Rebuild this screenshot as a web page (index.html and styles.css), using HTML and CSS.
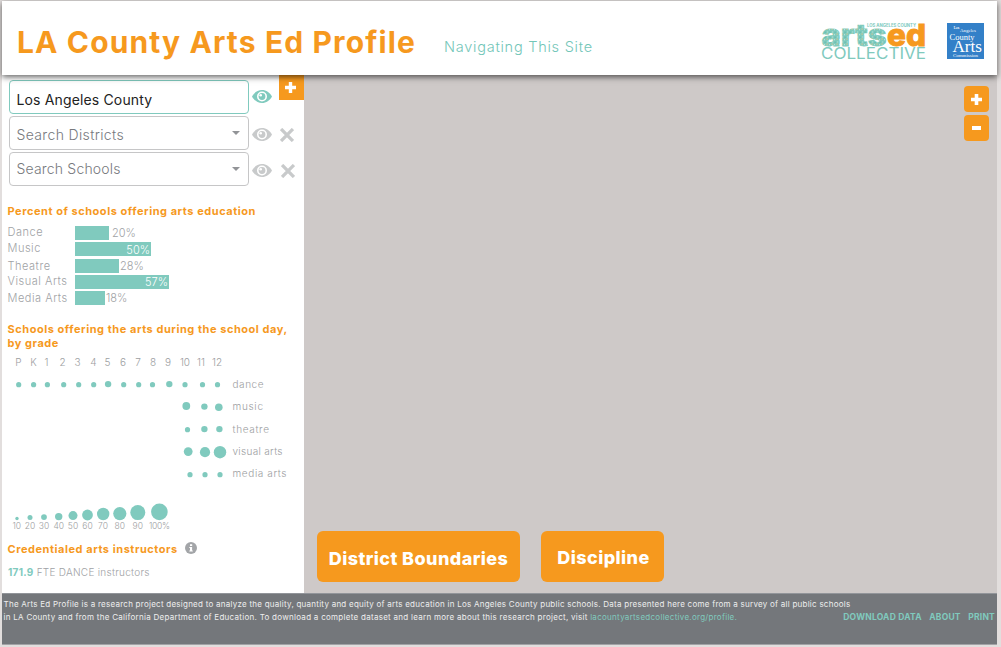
FILE: index.html
```html
<!DOCTYPE html>
<html lang="en">
<head>
<meta charset="utf-8">
<title>LA County Arts Ed Profile</title>
<link rel="stylesheet" href="styles.css">
</head>
<body>
<svg class="defs" width="0" height="0">
  <symbol id="eye" viewBox="0 0 20 13"><path fill="currentColor" fill-rule="evenodd" d="M0 6.500C2.200 2.400 5.800 0 10 0s7.800 2.400 10 6.500C17.800 10.600 14.200 13 10 13S2.200 10.600 0 6.500ZM10 1.500a5 5 0 1 0 0 10a5 5 0 1 0 0-10Z"/><circle cx="10" cy="6.500" r="3.400" fill="currentColor"/><circle cx="8.700" cy="5.200" r="1.300" fill="#fff"/></symbol>
  <symbol id="cross" viewBox="0 0 14 14"><path d="M2.200 2.200 11.800 11.800M11.800 2.200 2.200 11.800" stroke="currentColor" stroke-width="3.300" stroke-linecap="square" fill="none"/></symbol>
</svg>
<div class="frame">
  <header class="header">
    <h1 class="title">LA County Arts Ed Profile</h1>
    <a class="nav-link">Navigating This Site</a>
    <div class="logos">
      <svg class="logo-artsed" width="106" height="38" viewBox="0 0 106 38">
        <defs>
          <pattern id="confetti" width="5" height="5" patternUnits="userSpaceOnUse">
            <rect width="5" height="5" fill="#7fcabd"/>
            <rect x="0.500" y="0.500" width="1.200" height="1.200" fill="#dcc48f"/>
            <rect x="3" y="1" width="1" height="1.300" fill="#b5e0d7"/>
            <rect x="1" y="3.500" width="1.200" height="1" fill="#b5e0d7"/>
            <rect x="3.500" y="3.600" width="1.200" height="1.200" fill="#5fb9ac"/>
          </pattern>
        </defs>
        <text class="logo-word" x="0.500" y="22.800" textLength="65" lengthAdjust="spacingAndGlyphs" fill="url(#confetti)" stroke="url(#confetti)">arts</text>
        <text class="logo-word" x="66" y="22.800" textLength="39" lengthAdjust="spacingAndGlyphs" fill="#f6991e" stroke="#f6991e">ed</text>
        <text class="logo-top" x="46" y="4.300" textLength="49" lengthAdjust="spacingAndGlyphs">LOS ANGELES COUNTY</text>
        <text class="logo-bottom" x="0" y="36.300" textLength="105" lengthAdjust="spacingAndGlyphs">COLLECTIVE</text>
      </svg>
      <svg class="logo-commission" width="37" height="36" viewBox="0 0 37 36">
        <rect width="37" height="36" fill="#3380c8"/>
        <text x="6.500" y="5.500" font-size="5" textLength="6">Los</text>
        <text x="13" y="9" font-size="5" textLength="16" lengthAdjust="spacingAndGlyphs">Angeles</text>
        <text x="2.500" y="16.500" font-size="8.500" textLength="25" lengthAdjust="spacingAndGlyphs">County</text>
        <text x="5.500" y="29.200" font-size="16" textLength="29.500" lengthAdjust="spacingAndGlyphs">Arts</text>
        <text x="6" y="34" font-size="4.500" textLength="25" lengthAdjust="spacingAndGlyphs">Commission</text>
      </svg>
    </div>
  </header>

  <main class="main">
    <aside class="sidebar">
      <div class="filters">
        <div class="filter-row">
          <div class="field field-active"><span class="county">Los Angeles County</span></div>
          <svg class="eye eye-on"><use href="#eye"/></svg>
        </div>
        <div class="filter-row">
          <div class="field"><span class="districts">Search Districts</span><i class="caret"></i></div>
          <svg class="eye"><use href="#eye"/></svg>
          <svg class="cross"><use href="#cross"/></svg>
        </div>
        <div class="filter-row">
          <div class="field"><span class="schools">Search Schools</span><i class="caret"></i></div>
          <svg class="eye"><use href="#eye"/></svg>
          <svg class="cross cross-schools"><use href="#cross"/></svg>
        </div>
      </div>
      <button class="expand"><svg width="11" height="11" viewBox="0 0 11 11"><path d="M5.500 0V11M0 5.500H11" stroke="#fff" stroke-width="3.400"/></svg></button>

      <h2 class="heading percent-heading">Percent of schools offering arts education</h2>
      <div class="bars">
        <span class="bar-label">Dance</span><div class="bar-track"><div class="bar" style="width:34px"></div><span class="value value-gap">20%</span></div>
        <span class="bar-label">Music</span><div class="bar-track"><div class="bar bar-inner" style="width:76px">50%</div></div>
        <span class="bar-label label-low">Theatre</span><div class="bar-track"><div class="bar" style="width:44px"></div><span class="value">28%</span></div>
        <span class="bar-label">Visual Arts</span><div class="bar-track"><div class="bar bar-inner" style="width:94px">57%</div></div>
        <span class="bar-label label-low">Media Arts</span><div class="bar-track"><div class="bar" style="width:30px"></div><span class="value">18%</span></div>
      </div>

      <h2 class="heading grade-heading">Schools offering the arts during the school day,<br>by grade</h2>
      <svg class="grades" width="302" height="182" viewBox="2 352 302 182">
        <g class="grade-labels">
          <text x="18.500" y="366">P</text><text x="33.500" y="366">K</text><text x="46.500" y="366">1</text><text x="62.500" y="366">2</text><text x="77.500" y="366">3</text><text x="93.500" y="366">4</text><text x="107.500" y="366">5</text><text x="123" y="366">6</text><text x="138" y="366">7</text><text x="153" y="366">8</text><text x="168" y="366">9</text><text x="185" y="366">10</text><text x="201" y="366">11</text><text x="217" y="366">12</text>
        </g>
        <g class="dots">
          <circle cx="18.700" cy="384.700" r="2.600"/><circle cx="33.600" cy="384.700" r="2.600"/><circle cx="47.400" cy="384.700" r="2.600"/><circle cx="63.700" cy="384.700" r="2.600"/><circle cx="78.700" cy="384.700" r="2.600"/><circle cx="93.700" cy="384.700" r="2.600"/><circle cx="108.100" cy="384.100" r="3.200"/><circle cx="123.700" cy="384.700" r="2.600"/><circle cx="138.700" cy="384.700" r="2.600"/><circle cx="152.500" cy="384.700" r="2.600"/><circle cx="169.300" cy="384.100" r="3.200"/><circle cx="185" cy="384.700" r="2.600"/><circle cx="202.500" cy="384.700" r="2.600"/><circle cx="217.500" cy="384.700" r="2.600"/>
          <circle cx="186.300" cy="406" r="3.900"/><circle cx="204.400" cy="406.600" r="3.200"/><circle cx="218.800" cy="407.200" r="3.800"/>
          <circle cx="187.500" cy="429.700" r="2.600"/><circle cx="204.400" cy="429.100" r="3.200"/><circle cx="219.400" cy="429.100" r="3.200"/>
          <circle cx="188.200" cy="451.600" r="4.400"/><circle cx="205" cy="452.200" r="5.100"/><circle cx="220" cy="452.200" r="6.200"/>
          <circle cx="190" cy="474.700" r="2.600"/><circle cx="205" cy="474.700" r="2.600"/><circle cx="220" cy="474.700" r="2.600"/>
          <circle cx="17" cy="518.500" r="1.700"/><circle cx="30" cy="517.500" r="2.500"/><circle cx="44" cy="517.100" r="2.900"/><circle cx="58.700" cy="516.600" r="3.700"/><circle cx="73" cy="515.600" r="4.500"/><circle cx="87.500" cy="515" r="5.400"/><circle cx="103.200" cy="514" r="6.200"/><circle cx="119.800" cy="513.600" r="6.600"/><circle cx="137.800" cy="512.600" r="7.500"/><circle cx="159.400" cy="511.900" r="8.300"/>
        </g>
        <g class="series">
          <text x="232.500" y="387.500" textLength="31">dance</text><text x="232.500" y="410" textLength="30.500">music</text><text x="232.500" y="432.500" textLength="36.500">theatre</text><text x="232.500" y="454.700" textLength="50">visual arts</text><text x="232.500" y="477.300" textLength="54">media arts</text>
        </g>
        <g class="scale">
          <text x="16.700" y="528.800">10</text><text x="30" y="528.800">20</text><text x="44" y="528.800">30</text><text x="58.700" y="528.800">40</text><text x="73" y="528.800">50</text><text x="87.500" y="528.800">60</text><text x="103" y="528.800">70</text><text x="119.700" y="528.800">80</text><text x="137.800" y="528.800">90</text><text x="159.500" y="528.800" textLength="21">100%</text>
        </g>
      </svg>

      <div class="cred-line">
        <h2 class="heading cred-heading">Credentialed arts instructors</h2>
        <svg class="info" width="12" height="12" viewBox="0 0 12 12"><circle cx="6" cy="6" r="6" fill="#a3a5a8"/><path d="M5 2.200h2.200v1.700H5ZM4.300 4.900h2.800v3.500h.7v1.200H4.300V8.400H5V6.100h-.7Z" fill="#fff"/></svg>
      </div>
      <p class="instructors"><b>171.9</b> FTE DANCE instructors</p>
    </aside>

    <section class="map">
      <div class="zoom">
        <button class="zoom-btn"><svg width="11" height="11" viewBox="0 0 11 11"><path d="M5.500 0V11M0 5.500H11" stroke="#fff" stroke-width="3.600"/></svg></button>
        <button class="zoom-btn"><svg width="9" height="4" viewBox="0 0 9 4"><path d="M0 2H9" stroke="#fff" stroke-width="4"/></svg></button>
      </div>
      <div class="map-actions">
        <button class="action action-district">District Boundaries</button>
        <button class="action action-discipline">Discipline</button>
      </div>
    </section>
  </main>

  <footer class="footer">
    <p class="about">The Arts Ed Profile is a research project designed to analyze the quality, quantity and equity of arts education in Los Angeles County public schools. Data presented here come from a survey of all public schools<br><span class="about-more">in LA County and from the California Department of Education. To download a complete dataset and learn more about this research project, visit <a>lacountyartsedcollective.org/profile.</a></span></p>
    <nav class="links"><a>DOWNLOAD DATA</a><a>ABOUT</a><a>PRINT</a></nav>
  </footer>
</div>
</body>
</html>
```
FILE: styles.css
```css
* { box-sizing: border-box; }
body { margin: 0; background: #e2dedd; font-family: Inter, "Open Sans", sans-serif; overflow: hidden; }
h1, h2, p { margin: 0; }
button { border: 0; padding: 0; font: inherit; }
svg { display: block; }
.defs { position: absolute; }
.frame { width: 995px; height: 644px; margin: 1px 0 0 2px; display: flex; flex-direction: column; white-space: nowrap; }

.header { position: relative; z-index: 1; height: 74px; flex: none; background: #fff; display: flex; align-items: flex-start; box-shadow: 0 2px 6px rgba(0,0,0,.62); }
.title { margin: 22px 0 0 15px; width: 400px; font-size: 30px; line-height: 38px; font-weight: 700; letter-spacing: 1.120px; color: #f6991e; }
.nav-link { margin: 36px 0 0 27px; font-size: 14.500px; line-height: 20px; font-weight: 300; letter-spacing: .750px; color: #73c6b8; }
.logos { margin: 22px 13px 0 auto; display: flex; gap: 20px; }
.logo-artsed { overflow: visible; }
.logo-word { font-size: 30px; font-weight: 800; stroke-width: .9px; }
.logo-top { font-size: 4.800px; font-weight: 700; fill: #80cabe; }
.logo-bottom { font-size: 16px; font-weight: 400; fill: #80cabe; }
.logo-commission { font-family: "Liberation Serif", serif; fill: #fff; }

.main { height: 518px; flex: none; display: flex; }
.sidebar { position: relative; width: 302px; background: #fff; color: #a0a2a5; font-weight: 300; }
.filters { padding: 4.500px 0 0 6.500px; display: flex; flex-direction: column; gap: 2px; }
.filter-row { display: flex; align-items: center; height: 34px; }
.field { width: 240px; height: 34px; border: 1.500px solid #c6c6c7; border-radius: 4px; padding: 0 8px 0 7px; display: flex; align-items: center; justify-content: space-between; font-size: 14px; color: #77797d; }
.field-active { border-color: #80cabe; color: #222; padding-top: 5px; font-weight: 400; }
.county { letter-spacing: .150px; }
.districts { letter-spacing: .350px; padding-top: 3px; }
.schools { letter-spacing: .180px; }
.caret { border: 4px solid transparent; border-top-color: #929497; border-bottom: 0; }
.eye { width: 20px; height: 13px; margin-left: 3.500px; margin-top: 4px; color: #c8cacb; }
.eye-on { color: #80cabe; margin-top: -1px; }
.cross { width: 14px; height: 14px; margin: 4px 0 0 8px; color: #c8cacb; }
.cross-schools { margin-left: 9px; }
.expand { position: absolute; right: 0; top: 0; width: 25px; height: 25px; background: #f6991e; display: flex; align-items: center; justify-content: center; padding: 0 2px 0 0; }

.heading { font-size: 11px; line-height: 14px; font-weight: 700; color: #f6991e; margin-left: 5.500px; letter-spacing: .540px; }
.percent-heading { margin-top: 18.500px; }
.bars { margin: 8px 0 0 5.500px; display: grid; grid-template-columns: 67.500px 1fr; grid-auto-rows: 14px; row-gap: 2.300px; font-size: 11px; line-height: 14px; }
.bar-label { letter-spacing: .520px; }
.bar-label { margin-top: -1px; }
.label-low { margin-top: 0; }
.bar-track { display: flex; }
.bar { height: 14px; background: #80cabe; }
.bar-inner { color: #fff; text-align: right; padding: .5px 1px 0 0; }
.value { padding: 0 0 0 1px; }
.value-gap { padding-left: 3px; }
.grade-heading { margin-top: 17px; }
.grades { margin-top: 2px; }
.grade-labels { font-size: 10px; text-anchor: middle; fill: #9c9ea1; }
.dots { fill: #80cabe; }
.series { font-size: 10px; fill: #9c9ea1; }
.scale { font-size: 8.500px; text-anchor: middle; fill: #9c9ea1; }
.cred-line { display: flex; margin-top: 7px; }
.cred-heading { width: 170px; margin-top: 1px; }
.info { margin-left: 7.500px; margin-top: 1px; }
.instructors { margin: 9px 0 0 6px; font-size: 10px; line-height: 14px; letter-spacing: .280px; }
.instructors b { color: #80cabe; font-weight: 700; }

.map { flex: 1; background: #cec9c8; display: flex; flex-direction: column; justify-content: space-between; padding: 11px 8px 11px 13px; }
.zoom { align-self: flex-end; display: flex; flex-direction: column; gap: 3px; }
.zoom-btn { width: 25px; height: 26px; border-radius: 4px; background: #f6991e; display: flex; align-items: center; justify-content: center; }
.map-actions { display: flex; gap: 21px; }
.action { height: 51px; border-radius: 6px; background: #f6991e; color: #fff; font-size: 18px; font-weight: 800; letter-spacing: .420px; }
.action-district { width: 203px; padding-top: 4px; }
.action-discipline { width: 123px; padding-left: 2px; padding-top: 1px; }

.footer { flex: 1; background: #74777b; border-top: 1px solid #92959a; border-bottom: 1px solid #a2a3a6; display: flex; justify-content: space-between; font-size: 8px; line-height: 12.500px; color: #eee; padding: 4px 2px 0 1.500px; }
.about { width: 830px; letter-spacing: .252px; }
.about-more { letter-spacing: .280px; }
.about a { color: #80cabe; }
.links { display: flex; gap: 7.500px; padding-top: 13px; font-weight: 700; color: #80cabe; font-size: 8.500px; letter-spacing: .220px; }
```
